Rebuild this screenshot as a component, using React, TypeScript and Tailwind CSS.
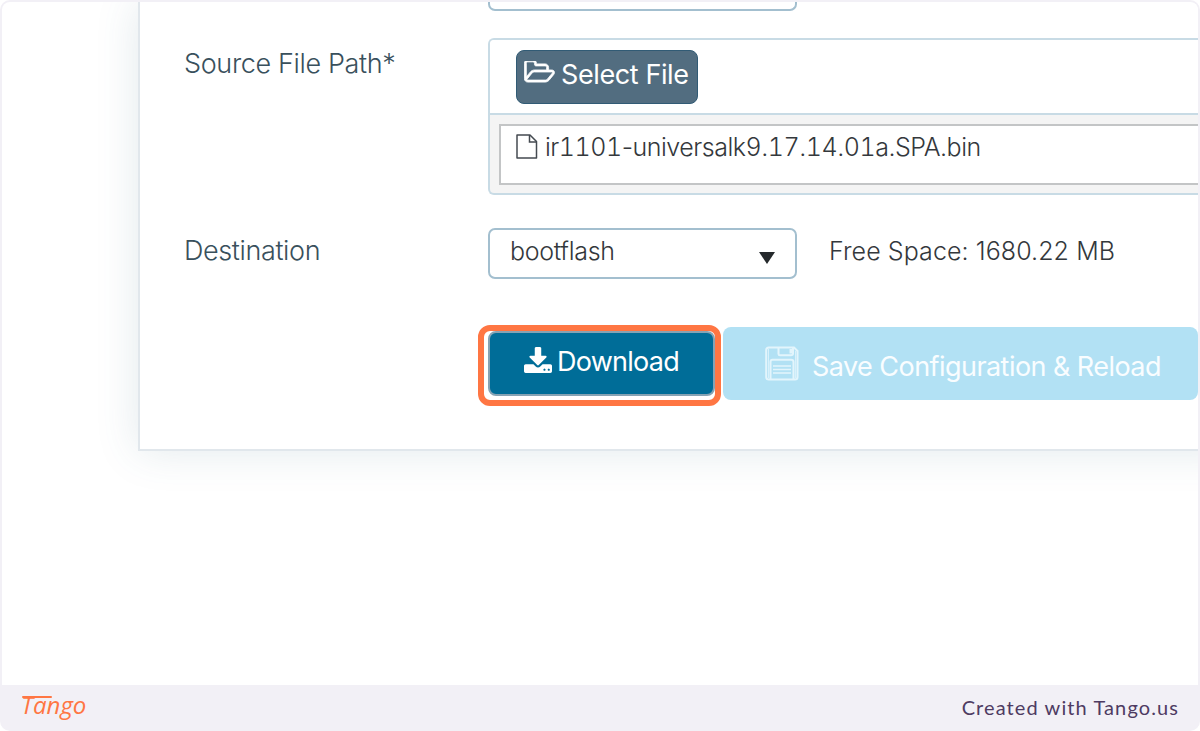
import React from "react";

function FolderOpenIcon() {
  return (
    <svg viewBox="-20 108 1960 1448" className="h-[24px] w-[31px] shrink-0" fill="currentColor" stroke="currentColor" strokeWidth="50" aria-hidden="true">
      <path d="M1781 803q0-35-53-35h-1088q-40 0-85.5 21.5t-71.5 52.5l-294 363q-18 24-18 40 0 35 53 35h1088q40 0 86-22t71-53l294-363q18-22 18-39zm-1141-163h768v-160q0-40-28-68t-68-28h-576q-40 0-68-28t-28-68v-64q0-40-28-68t-68-28h-320q-40 0-68 28t-28 68v853l256-315q44-53 116-87.5t140-34.5zm1269 163q0 62-46 120l-295 363q-43 53-116 87.5t-140 34.5h-1088q-92 0-158-66t-66-158v-960q0-92 66-158t158-66h320q92 0 158 66t66 158v32h544q92 0 158 66t66 158v160h192q54 0 99 24.5t67 70.5q15 32 15 68z" />
    </svg>
  );
}

function DownloadIcon() {
  return (
    <svg viewBox="64 0 1664 1536" className="h-[26px] w-[28px] shrink-0" fill="currentColor" aria-hidden="true">
      <path d="M1344 1344q0-26-19-45t-45-19-45 19-19 45 19 45 45 19 45-19 19-45zm256 0q0-26-19-45t-45-19-45 19-19 45 19 45 45 19 45-19 19-45zm128-224v320q0 40-28 68t-68 28h-1472q-40 0-68-28t-28-68v-320q0-40 28-68t68-28h465l135 136q58 56 136 56t136-56l136-136h464q40 0 68 28t28 68zm-325-569q17 41-14 70l-448 448q-18 19-45 19t-45-19l-448-448q-31-29-14-70 17-39 59-39h256v-448q0-26 19-45t45-19h256q26 0 45 19t19 45v448h256q42 0 59 39z" />
    </svg>
  );
}

function FileIcon() {
  return (
    <svg viewBox="0 0 22 25" className="h-[25px] w-[22px] shrink-0" fill="none" stroke="#444a50" strokeWidth="1.5" aria-hidden="true">
      <path d="M1 1H14L20.5 7.5V24H1Z" strokeLinejoin="round" />
      <path d="M13.5 1V8H20.5" />
    </svg>
  );
}

function FloppyIcon() {
  return (
    <svg viewBox="0 0 34 35" className="h-[35px] w-[34px] shrink-0" fill="none" stroke="#e3f5fc" strokeWidth="2" aria-hidden="true">
      <path d="M4 1.5H29L32.5 5V31Q32.5 33.5 30 33.5H4Q1.2 33.5 1.2 31V4Q1.2 1.5 4 1.5Z" />
      <path d="M13.5 1.5V8Q13.5 9.2 15 9.2H26Q28 9.2 28 7.5V1.5" />
      <path d="M26 3V7.5" strokeWidth="3" />
      <path d="M5.5 33V16Q5.5 13.8 7.5 13.8H26Q28.5 13.8 28.5 16V33" />
      <path d="M8 20H26M8 23.5H26M8 27H26" strokeWidth="1.4" />
      <path d="M3.5 3V32M30.5 5V32" strokeWidth="0.8" />
    </svg>
  );
}

export default function App() {
  return (
    <div className="flex h-[731px] w-[1200px] flex-col overflow-hidden rounded-[10px] bg-[#f2f0f6] px-[2px] pt-[2px] font-['Inter',sans-serif]">
      <main className="h-[683px] shrink-0 overflow-hidden rounded-t-[8px] bg-white">
        <section className="ml-[136px] h-[449px] w-[1100px] border-b-2 border-l-2 border-[#e1e7ec] bg-white shadow-[0_0_40px_rgba(60,110,130,0.15)]">
          <div className="ml-[348px] h-[9px] w-[309px] rounded-b-[7px] border-2 border-t-0 border-[#a3bfcf]" />
          <div className="mt-[27px] flex h-[157px]">
            <div className="w-[348px] shrink-0 pl-[44px] pt-[9px] text-[27px] font-light leading-[34px] tracking-[-0.36px] text-[#39505c]">
              Source File Path*
            </div>
            <div className="flex w-[752px] shrink-0 flex-col overflow-hidden rounded-l-[6px] border-2 border-r-0 border-[#c8dbe5] bg-[#f4f4f4]">
              <div className="h-[75px] shrink-0 border-b-2 border-[#c8dbe5] bg-white pl-[26px] pt-[10px]">
                <button className="flex h-[54px] w-[182px] rounded-[8px] border border-[#315b75] bg-[#526d80] pl-[7px] text-white">
                  <span className="pt-[10px]"><FolderOpenIcon /></span>
                  <span className="ml-[6px] whitespace-nowrap pt-[7px] text-[27px] font-normal leading-[34px] tracking-[-0.4px]">Select File</span>
                </button>
              </div>
              <div className="ml-[9px] mt-[9px] flex h-[61px] w-[760px] shrink-0 border-2 border-[#c3c5c6] bg-white pl-[15px]">
                <span className="pt-[8px]"><FileIcon /></span>
                <span className="ml-[7px] whitespace-nowrap pt-[4px] text-[25px] font-light leading-[34px] tracking-[-0.48px] text-[#34383c]">
                  ir<span className="tabular-nums">1101</span>-universalk<span className="tabular-nums">9</span>.<span className="tabular-nums">17</span>.<span className="tabular-nums">14</span>.<span className="tabular-nums">01</span>a.SPA.bin
                </span>
              </div>
            </div>
          </div>
          <div className="mt-[33px] flex h-[51px]">
            <div className="w-[348px] shrink-0 pl-[44px] pt-[6px] text-[27px] font-light leading-[34px] tracking-[-0.38px] text-[#39505c]">Destination</div>
            <div className="flex w-[309px] justify-between rounded-[7px] border-2 border-[#a3bfcf] pl-[20px] pr-[20px]">
              <span className="pt-[4px] text-[25px] font-light leading-[34px] tracking-[-0.3px] text-[#34383c]">bootflash</span>
              <svg viewBox="0 0 16 12" className="mt-[22px] h-[12px] w-[16px]" fill="#25292c" aria-hidden="true"><path d="M0 0H16L8 12Z" /></svg>
            </div>
            <span className="ml-[32px] whitespace-nowrap pt-[6px] text-[25px] font-light leading-[34px] tracking-[0.08px] text-[#34383c]">Free Space: 1680.22 MB</span>
          </div>
          <div className="mt-[46px] flex pl-[338px]">
            <div className="h-[81px] w-[243px] shrink-0 rounded-[12px] border-[6px] border-[#ff7643] pl-[4px]">
              <button className="flex h-[65px] w-[227px] rounded-[8px] border-2 border-[#86a3b4] bg-[#006d98] pl-[34px] text-white">
                <span className="pt-[14px]"><DownloadIcon /></span>
                <span className="ml-[5px] pt-[12px] text-[27px] font-normal leading-[34px] tracking-[-0.75px]">Download</span>
              </button>
            </div>
            <button className="ml-[2px] mt-[2px] flex h-[73px] w-[475px] shrink-0 rounded-[8px] bg-[#b2e1f4] pl-[42px] text-[#f9fdff]">
              <span className="pt-[19px]"><FloppyIcon /></span>
              <span className="ml-[13px] whitespace-nowrap pt-[23px] text-[27px] font-normal leading-[34px] tracking-[-0.55px]">Save Configuration &amp; Reload</span>
            </button>
          </div>
        </section>
      </main>
      <footer className="flex h-[46px] justify-between pl-[18px] pr-[19px]">
        <div className="relative h-[46px] pl-[1px] pt-[6px] font-['Open_Sans',sans-serif] text-[24px] font-normal italic leading-[28px] text-[#ff7643]">
          Tango
          <span className="absolute left-[2px] top-[11px] h-[2px] w-[30px] rounded-full bg-[#ff7643]" />
        </div>
        <span className="pt-[8px] font-['Lato',sans-serif] text-[20px] leading-[28px] tracking-[1.1px] text-[#4e3b62]">Created with Tango.us</span>
      </footer>
    </div>
  );
}
